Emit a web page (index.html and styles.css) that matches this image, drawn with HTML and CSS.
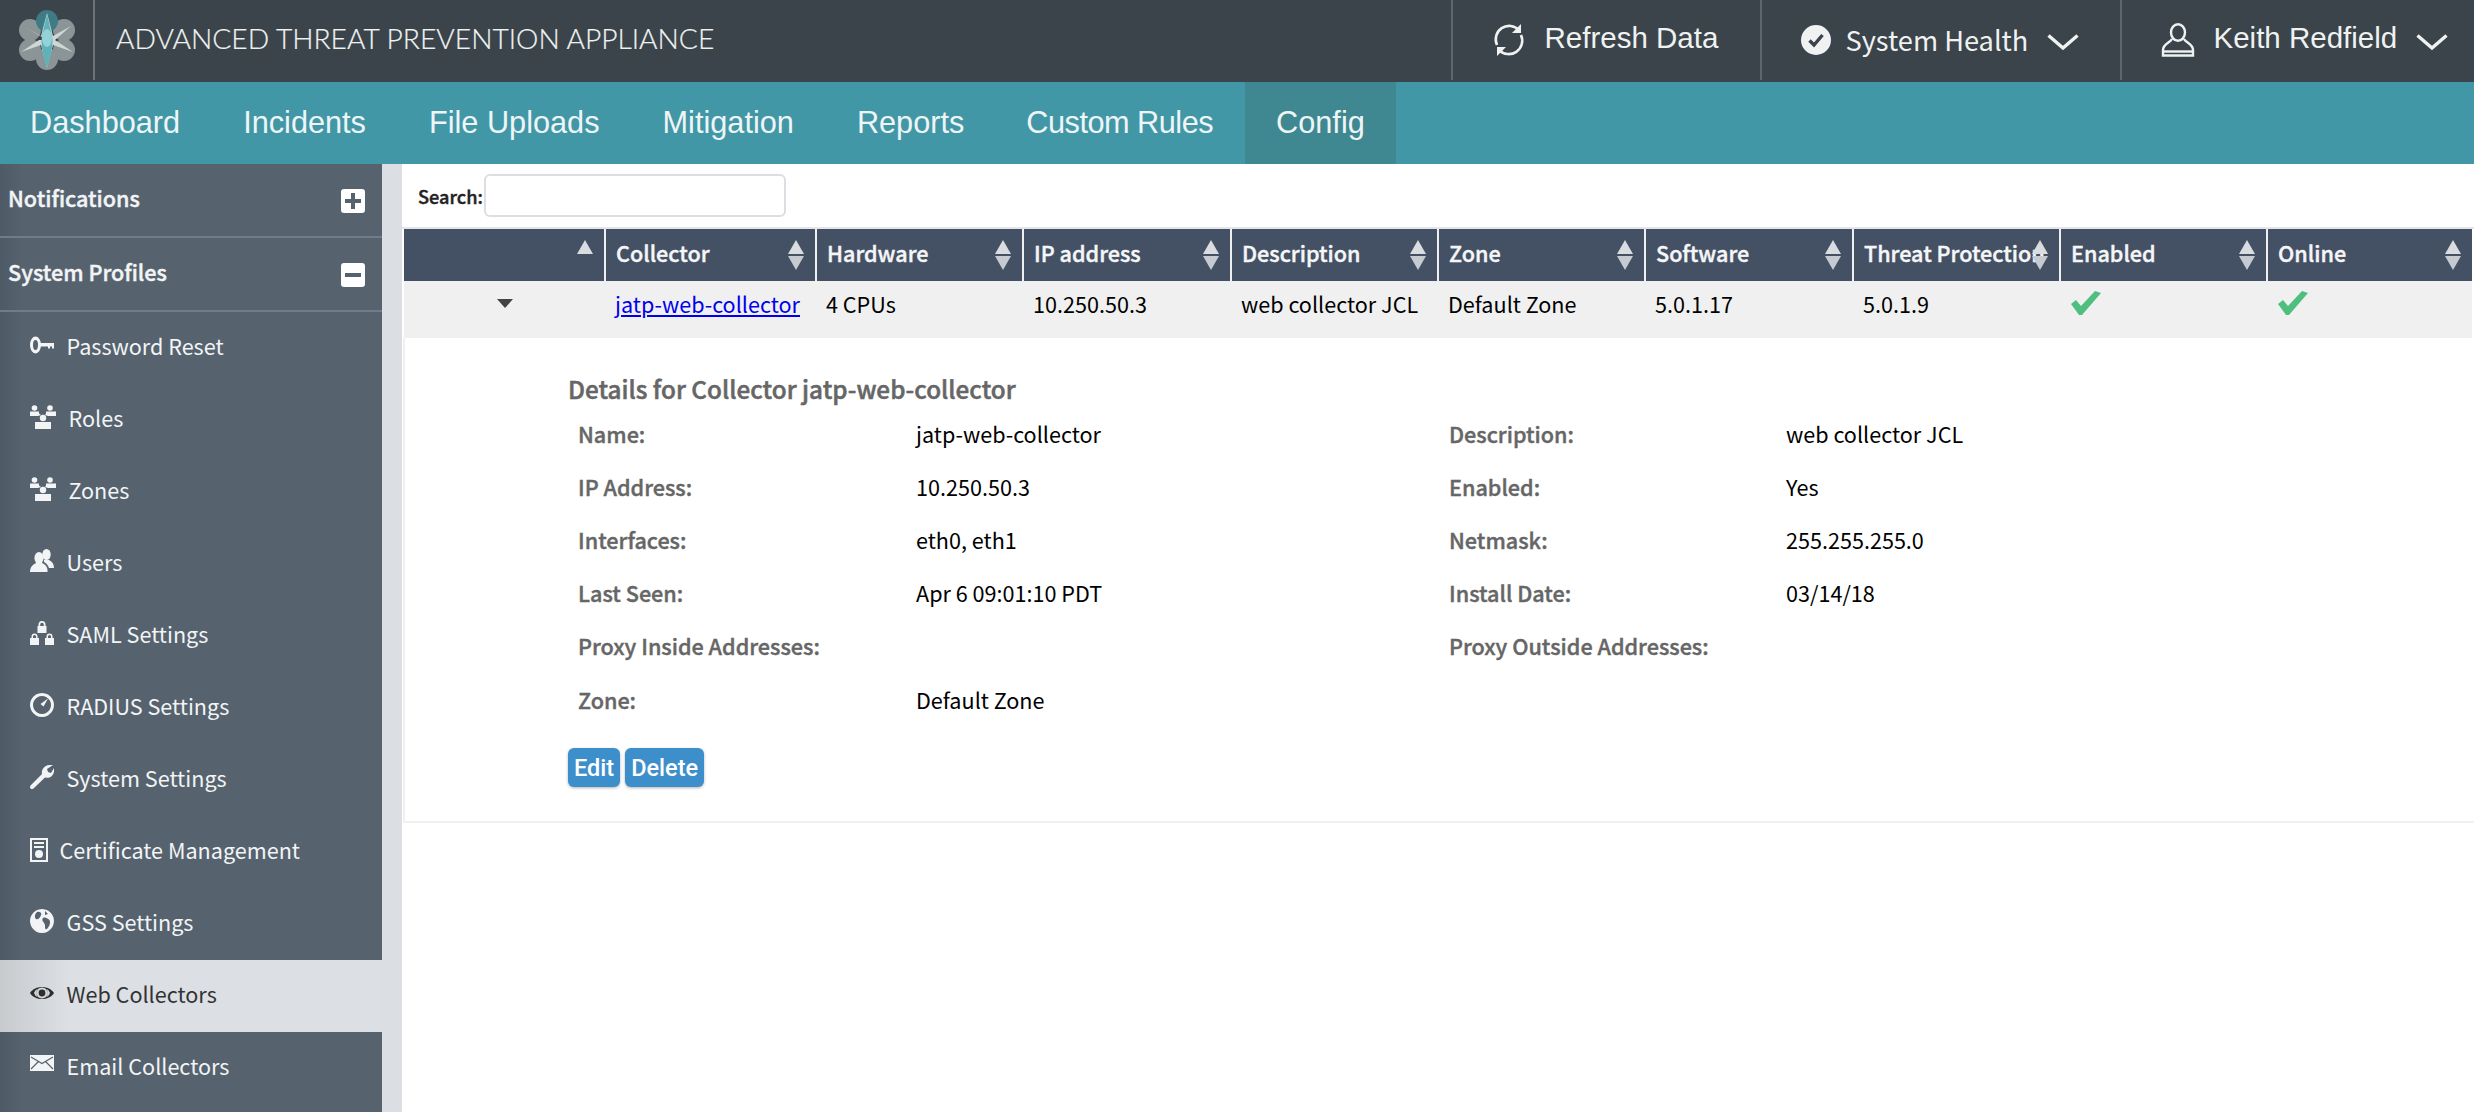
FILE: index.html
```html
<!DOCTYPE html>
<html lang="en">
<head>
    <meta charset="UTF-8">
    <title>Advanced Threat Prevention Appliance</title>
    <link rel="stylesheet" href="styles.css">
</head>
<body>
    <header class="topbar">
        <div class="logo">
            <svg width="56" height="60" viewBox="0 0 56 60">
                <g fill="#8b9497">
                    <circle cx="11" cy="20" r="11"/><circle cx="45" cy="20" r="11"/>
                    <circle cx="11" cy="40" r="11"/><circle cx="45" cy="40" r="11"/>
                    <circle cx="28" cy="49" r="11"/>
                </g>
                <circle cx="28" cy="11" r="11" fill="#3e7b84"/>
                <path d="M28 30 L4 16 L22 26 L28 3 L34 26 L52 16 L36 30 L54 42 L34 35 L28 58 L22 35 L2 42 L20 30 Z" fill="#d0d5d6"/>
                <path d="M28 4 L33 26 Q35 36 28 58 Q21 36 23 26 Z" fill="#5fb1ba"/>
                <ellipse cx="28" cy="28" rx="5" ry="9" fill="#93d2d8"/>
            </svg>
        </div>
        <div class="app-title">ADVANCED THREAT PREVENTION APPLIANCE</div>
        <div class="top-item refresh">
            <svg width="34" height="34" viewBox="0 0 34 34" fill="none" stroke="#f0f2f2" stroke-width="2.600">
                <path d="M5 22 A13.500 13.500 0 0 1 27 7"/>
                <path d="M29 12 A13.500 13.500 0 0 1 7 27"/>
                <path d="M29 1 V10 H20" fill="#f0f2f2" stroke="none"/>
                <path d="M5 33 V24 H14" fill="#f0f2f2" stroke="none"/>
            </svg>
            <span class="top-label">Refresh Data</span>
        </div>
        <div class="top-item health">
            <svg width="30" height="30" viewBox="0 0 30 30">
                <circle cx="15" cy="15" r="15" fill="#f0f2f2"/>
                <path d="M8.500 15.500 L13 20 L21.500 10" fill="none" stroke="#3a444a" stroke-width="3.400"/>
            </svg>
            <span class="health-label">System Health</span>
            <svg class="chevron" width="32" height="16" viewBox="0 0 32 16"><path d="M1.500 1.500 L16 14 L30.500 1.500" fill="none" stroke="#f0f2f2" stroke-width="3.400"/></svg>
        </div>
        <div class="top-item user">
            <svg width="34" height="34" viewBox="0 0 34 34" fill="none" stroke="#f0f2f2" stroke-width="2.400">
                <ellipse cx="17" cy="9.500" rx="7" ry="8.300"/>
                <path d="M11 16 C9 20 2 21 2 27 V32.500 H32 V27 C32 21 25 20 23 16"/>
                <path d="M2 28.500 H32"/>
            </svg>
            <span class="top-label">Keith Redfield</span>
            <svg class="chevron" width="32" height="16" viewBox="0 0 32 16"><path d="M1.500 1.500 L16 14 L30.500 1.500" fill="none" stroke="#f0f2f2" stroke-width="3.400"/></svg>
        </div>
    </header>

    <nav class="mainnav">
        <a>Dashboard</a>
        <a>Incidents</a>
        <a>File Uploads</a>
        <a>Mitigation</a>
        <a>Reports</a>
        <a class="tight">Custom Rules</a>
        <a class="active">Config</a>
    </nav>

    <div class="page">
        <aside class="sidebar">
            <div class="side-head">
                <span>Notifications</span>
                <span class="side-toggle"><i class="bar"></i><i class="bar upright"></i></span>
            </div>
            <div class="side-head">
                <span>System Profiles</span>
                <span class="side-toggle"><i class="bar"></i></span>
            </div>
            <a class="side-item">
                <svg class="side-icon" viewBox="0 0 24 24"><path d="M5.500 3.500 A5.500 8.500 0 1 1 5.500 20.500 A5.500 8.500 0 1 1 5.500 3.500 Z M5.500 7 A2.500 5 0 1 0 5.500 17 A2.500 5 0 1 0 5.500 7 Z" fill-rule="evenodd"/><path d="M10 10 H24 V15.500 H22 V13.500 H20 V15.500 H18 V13.500 H10 Z"/></svg>
                <span>Password Reset</span>
            </a>
            <a class="side-item">
                <svg class="side-icon wide" viewBox="0 0 26 24"><circle cx="4.500" cy="3" r="2.800"/><circle cx="20" cy="3" r="2.800"/><circle cx="13" cy="13" r="3.200"/><path d="M0 6.500 H9 V8.500 L11 10 L8 11 H0 Z M26 6.500 H16 V8.500 L15 10 L18 11 H26 Z M5 17 H21 V24 H5 Z"/></svg>
                <span class="shift">Roles</span>
            </a>
            <a class="side-item">
                <svg class="side-icon wide" viewBox="0 0 26 24"><circle cx="4.500" cy="3" r="2.800"/><circle cx="20" cy="3" r="2.800"/><circle cx="13" cy="13" r="3.200"/><path d="M0 6.500 H9 V8.500 L11 10 L8 11 H0 Z M26 6.500 H16 V8.500 L15 10 L18 11 H26 Z M5 17 H21 V24 H5 Z"/></svg>
                <span class="shift">Zones</span>
            </a>
            <a class="side-item">
                <svg class="side-icon" viewBox="0 0 24 24"><ellipse cx="9" cy="9" rx="4.600" ry="6"/><path d="M0 23 C0 17 4 15 6 14 H12 C15 15 18 18 17.500 23 Z"/><ellipse cx="16.500" cy="5.500" rx="4.200" ry="5.500"/><path d="M14 11 H19 C21 12 24 14 24 19 H19 C18 16 16 14 14 13 Z"/></svg>
                <span>Users</span>
            </a>
            <a class="side-item">
                <svg class="side-icon" viewBox="0 0 24 24"><path d="M7.500 5 H16.500 V12 H7.500 Z M0 17 H9 V24 H0 Z M15 17 H24 V24 H15 Z" /><path fill-rule="evenodd" d="M8.500 5 V3.500 A3.500 3.500 0 0 1 15.500 3.500 V5 H13.800 V3.500 A1.800 1.800 0 0 0 10.200 3.500 V5 Z M1.500 17 V15.500 A3 3 0 0 1 7.500 15.500 V17 H6 V15.500 A1.500 1.500 0 0 0 3 15.500 V17 Z M16.500 17 V15.500 A3 3 0 0 1 22.500 15.500 V17 H21 V15.500 A1.500 1.500 0 0 0 18 15.500 V17 Z"/></svg>
                <span>SAML Settings</span>
            </a>
            <a class="side-item">
                <svg class="side-icon" viewBox="0 0 24 24"><path d="M12 0 A12 12 0 1 1 11.990 0 Z M12 3 A9 9 0 1 0 12.010 3 Z" fill-rule="evenodd"/><path d="M10.500 11 L18 5.500 L13.500 13.500 Z"/></svg>
                <span>RADIUS Settings</span>
            </a>
            <a class="side-item">
                <svg class="side-icon" viewBox="0 0 24 24"><path d="M1 24 Q-1 22 1 20 L12 9 C11 4 15 -1 23 0 L17 4 L18 7 L21 8 L24 3 C25 10 20 14 15 12.500 L4 23 Q2.500 24.500 1 24 Z"/></svg>
                <span>System Settings</span>
            </a>
            <a class="side-item">
                <svg class="side-icon narrow" viewBox="0 0 18 24"><path d="M0 0 H18 V24 H0 Z M2 2 V22 H16 V2 Z" fill-rule="evenodd"/><path d="M4 4 H14 V6 H4 Z M4 8 H14 V10 H4 Z"/><circle cx="9" cy="16" r="4"/></svg>
                <span>Certificate Management</span>
            </a>
            <a class="side-item">
                <svg class="side-icon" viewBox="0 0 24 24"><path fill-rule="evenodd" d="M12 0 A12 12 0 1 1 11.990 0 Z M7 3 C5 5 4 8 6 10 C8 11 10 9 11 6 C12 4 10 2 7 3 Z M13 9 C11 12 14 13 15 16 C15 19 15 21 17 20 C19 18 21 14 19.500 11 C17 9 15 8 13 9 Z M15 2 L18 5 L15 6 Z"/></svg>
                <span>GSS Settings</span>
            </a>
            <a class="side-item active">
                <svg class="side-icon" viewBox="0 0 24 24"><path fill-rule="evenodd" d="M0 12 C5 4 19 4 24 12 C19 20 5 20 0 12 Z M12 6.500 A5.500 5.500 0 1 0 12.010 6.500 Z M4 12 C5 9.500 6 8.700 7.500 8 C6 10 6 14 7.500 16 C6 15.300 5 14.500 4 12 Z M20 12 C19 9.500 18 8.700 16.500 8 C18 10 18 14 16.500 16 C18 15.300 19 14.500 20 12 Z"/><circle cx="12" cy="12" r="3.400"/></svg>
                <span>Web Collectors</span>
            </a>
            <a class="side-item">
                <svg class="side-icon mail" viewBox="0 0 24 16"><rect width="24" height="16"/><path d="M1 2 L12 8.500 L23 2 M1 14 L8.500 6.500 M23 14 L15.500 6.500" fill="none" stroke="#56636f" stroke-width="1.200"/></svg>
                <span>Email Collectors</span>
            </a>
        </aside>

        <main class="content">
            <div class="search">
                <label>Search:</label>
                <input type="text">
            </div>
            <table class="grid">
                <colgroup>
                    <col class="c0"><col class="c1"><col class="c2"><col class="c3"><col class="c4">
                    <col class="c5"><col class="c6"><col class="c7"><col class="c8"><col class="c9">
                </colgroup>
                <thead>
                    <tr>
                        <th><i class="sort up-only"></i></th>
                        <th>Collector<i class="sort"></i></th>
                        <th>Hardware<i class="sort"></i></th>
                        <th>IP address<i class="sort"></i></th>
                        <th>Description<i class="sort"></i></th>
                        <th>Zone<i class="sort"></i></th>
                        <th>Software<i class="sort"></i></th>
                        <th>Threat Protection<i class="sort"></i></th>
                        <th>Enabled<i class="sort"></i></th>
                        <th>Online<i class="sort"></i></th>
                    </tr>
                </thead>
                <tbody>
                    <tr>
                        <td class="expander"><i class="caret"></i></td>
                        <td><a class="link">jatp-web-collector</a></td>
                        <td>4 CPUs</td>
                        <td>10.250.50.3</td>
                        <td>web collector JCL</td>
                        <td>Default Zone</td>
                        <td>5.0.1.17</td>
                        <td>5.0.1.9</td>
                        <td><svg class="check" viewBox="0 0 30 24"><path d="M0 13 L5 9 L10 15 L24 0 L30 2 L11 24 H8 Z"/></svg></td>
                        <td><svg class="check" viewBox="0 0 30 24"><path d="M0 13 L5 9 L10 15 L24 0 L30 2 L11 24 H8 Z"/></svg></td>
                    </tr>
                </tbody>
            </table>

            <section class="details">
                <h3>Details for Collector jatp-web-collector</h3>
                <dl class="detail-grid">
                    <dt>Name:</dt><dd>jatp-web-collector</dd>
                    <dt>Description:</dt><dd>web collector JCL</dd>
                    <dt>IP Address:</dt><dd>10.250.50.3</dd>
                    <dt>Enabled:</dt><dd>Yes</dd>
                    <dt>Interfaces:</dt><dd>eth0, eth1</dd>
                    <dt>Netmask:</dt><dd>255.255.255.0</dd>
                    <dt>Last Seen:</dt><dd>Apr 6 09:01:10 PDT</dd>
                    <dt>Install Date:</dt><dd>03/14/18</dd>
                    <dt>Proxy Inside Addresses:</dt><dd></dd>
                    <dt>Proxy Outside Addresses:</dt><dd></dd>
                    <dt>Zone:</dt><dd>Default Zone</dd>
                </dl>
                <div class="actions">
                    <button>Edit</button>
                    <button>Delete</button>
                </div>
            </section>
        </main>
    </div>
</body>
</html>
```

FILE: styles.css
```css
html, body {
    margin: 0;
    padding: 0;
    height: 100%;
    overflow: hidden;
}

body {
    font-family: "Noto Sans CJK SC", "Noto Sans", sans-serif;
    font-size: 21.600px;
    line-height: 30px;
    background: white;
    color: #000;
}

/* top bar */
.topbar {
    display: flex;
    height: 82px;
    background-color: #3a444a;
    color: #f0f2f2;
}

.logo {
    width: 93px;
    height: 80px;
    border-right: 2px solid #6d7377;
    display: flex;
    align-items: center;
    justify-content: center;
}

.app-title {
    margin-left: 21px;
    flex: 1;
    font-family: "Lato", sans-serif;
    font-weight: 300;
    font-size: 28.200px;
    line-height: 76px;
    white-space: nowrap;
    -webkit-text-stroke: 0.200px currentColor;
}

.top-item {
    display: flex;
    align-items: center;
    height: 80px;
    border-left: 2px solid #5d666b;
    box-sizing: border-box;
}

.top-label {
    font-family: "Liberation Sans", sans-serif;
    font-size: 29.500px;
    line-height: 72px;
    white-space: nowrap;
    margin-bottom: 4px;
}

.refresh {
    width: 309px;
    padding-left: 39px;
    gap: 18.500px;
}

.health {
    width: 360px;
    padding-left: 39px;
    gap: 14.500px;
}

.health-label {
    font-size: 27.200px;
    white-space: nowrap;
    margin-bottom: 2px;
    margin-right: 4px;
}

.user {
    width: 354px;
    padding-left: 39px;
    gap: 18.500px;
}

.chevron {
    flex: none;
    margin-top: 4px;
}

/* nav */
.mainnav {
    display: flex;
    height: 82px;
    background-color: #4297a6;
}

.mainnav a {
    padding: 0 31.500px;
    font-family: "Liberation Sans", sans-serif;
    font-size: 30.700px;
    line-height: 82px;
    color: #eef5f6;
    white-space: nowrap;
}

.mainnav a:first-child {
    padding-left: 30px;
}

.mainnav a.tight {
    letter-spacing: -0.500px;
    margin-left: -1px;
}

.mainnav a.active {
    background-color: #3f8891;
}

/* page */
.page {
    display: flex;
    height: 948px;
    background: white;
}

.sidebar {
    width: 382px;
    flex: none;
    overflow: hidden;
    background: linear-gradient(to right, #4e5b66, #56636f 24px);
    color: #f2f4f5;
}

.side-head {
    height: 68px;
    display: flex;
    align-items: center;
    justify-content: space-between;
    padding: 0 17px 4px 8px;
    font-weight: 500;
    -webkit-text-stroke: 0.400px currentColor;
    border-bottom: 2px solid #6f7d8a;
}

.side-toggle {
    position: relative;
    width: 24px;
    height: 24px;
    margin-top: 6px;
    background-color: #fff;
    border-radius: 3px;
    -webkit-text-stroke: 0;
}

.side-toggle .bar {
    position: absolute;
    left: 4px;
    top: 10px;
    width: 16px;
    height: 4px;
    background-color: #56636f;
}

.side-toggle .bar.upright {
    left: 10px;
    top: 4px;
    width: 4px;
    height: 16px;
}

.side-item {
    height: 72px;
    display: flex;
    align-items: center;
    padding-left: 30px;
    gap: 12.500px;
    box-sizing: border-box;
}

.side-item span {
    margin-bottom: 4px;
}

.side-item.active {
    background: linear-gradient(to right, #c8cbce, #dcdfe3 70px);
    color: #333;
}

.side-icon {
    width: 24px;
    height: 24px;
    fill: #f2f4f5;
    flex: none;
    margin-top: -6px;
}

.side-icon.wide {
    width: 26px;
}

.side-icon.narrow {
    width: 18px;
    margin-top: -4px;
    margin-right: -1px;
}

.side-icon.mail {
    height: 16px;
    margin-top: -10px;
}

.side-item.active .side-icon {
    fill: #2e2e2e;
}

/* main content */
.content {
    flex: 1;
    border-left: 20px solid #dbdee3;
    min-width: 0;
}

.search {
    height: 65px;
    display: flex;
    align-items: flex-start;
    padding: 10px 0 0 16px;
    font-weight: 500;
    font-size: 18.200px;
    box-sizing: border-box;
    border-bottom: 2px solid #e3e6ea;
    color: #222;
}

.search label {
    width: 66px;
    margin-top: 7px;
    white-space: nowrap;
    -webkit-text-stroke: 0.400px currentColor;
}

.search input {
    width: 302px;
    height: 43px;
    box-sizing: border-box;
    border: 2px solid #dbdee3;
    border-radius: 6px;
    background: white;
    padding: 0;
    margin: 0;
}

.grid {
    border-collapse: collapse;
    table-layout: fixed;
    width: 2068px;
    margin-left: 2px;
}

.c0 { width: 201px; }
.c1 { width: 211px; }
.c2 { width: 207px; }
.c3 { width: 208px; }
.c4 { width: 207px; }
.c5 { width: 207px; }
.c6 { width: 208px; }
.c7 { width: 207px; }
.c8 { width: 207px; }
.c9 { width: 205px; }

.grid th {
    height: 52px;
    padding: 0 0 4px 10px;
    box-sizing: border-box;
    position: relative;
    background-color: #445064;
    color: #f5f6f7;
    font-weight: 500;
    -webkit-text-stroke: 0.400px currentColor;
    text-align: left;
    white-space: nowrap;
    border-left: 2px solid #f0f0f0;
}

.grid th:first-child {
    border-left: none;
}

.sort {
    position: absolute;
    right: 10px;
    top: 11px;
    width: 17px;
    height: 30px;
}

.sort::before, .sort::after {
    content: "";
    position: absolute;
    left: 0;
    border-left: 8.500px solid transparent;
    border-right: 8.500px solid transparent;
}

.sort::before {
    top: 0;
    border-bottom: 14px solid #d9dde0;
}

.sort::after {
    bottom: 0;
    border-top: 14px solid #c6cbd2;
}

.sort.up-only::after {
    display: none;
}

.grid td {
    height: 57px;
    padding: 0 0 12px 10px;
    box-sizing: border-box;
    background-color: #f0f0f0;
    white-space: nowrap;
}

.grid td.expander {
    text-align: center;
    padding: 0 26px 18px 27px;
}

.caret {
    display: inline-block;
    border-left: 8px solid transparent;
    border-right: 8px solid transparent;
    border-top: 9px solid #444;
    vertical-align: middle;
}

.link {
    color: #0000ee;
    text-decoration: underline;
}

.check {
    display: block;
    width: 30px;
    height: 24px;
    margin-left: 1px;
    fill: #4fbf7f;
    margin-bottom: 2px;
}

/* detail panel */
.details {
    height: 485px;
    box-sizing: border-box;
    margin-left: 1px;
    padding: 33px 0 0 163px;
    border-left: 2px solid #f0f0f0;
    border-bottom: 2px solid #f0f0f0;
    width: 2071px;
}

.details h3 {
    margin: 0;
    font-size: 24.300px;
    line-height: 36px;
    font-weight: 500;
    -webkit-text-stroke: 0.500px currentColor;
    color: #666;
}

.detail-grid {
    display: grid;
    grid-template-columns: 338px 533px 337px 1fr;
    grid-auto-rows: 53.200px;
    margin: 0;
    padding: 0 0 0 10px;
    align-items: center;
}

.detail-grid dt {
    font-weight: 500;
    -webkit-text-stroke: 0.400px currentColor;
    color: #666;
}

.detail-grid dd {
    margin: 0;
    color: #000;
}

.actions {
    display: flex;
    gap: 5px;
    margin-top: 22px;
}

.actions button {
    height: 39px;
    padding: 0 6px;
    border: none;
    border-radius: 6px;
    background-color: #3d8fcb;
    box-shadow: 0 1px 3px rgba(0, 0, 0, 0.3);
    color: white;
    font-family: "Roboto", sans-serif;
    font-weight: 500;
    font-size: 23.500px;
}
```
